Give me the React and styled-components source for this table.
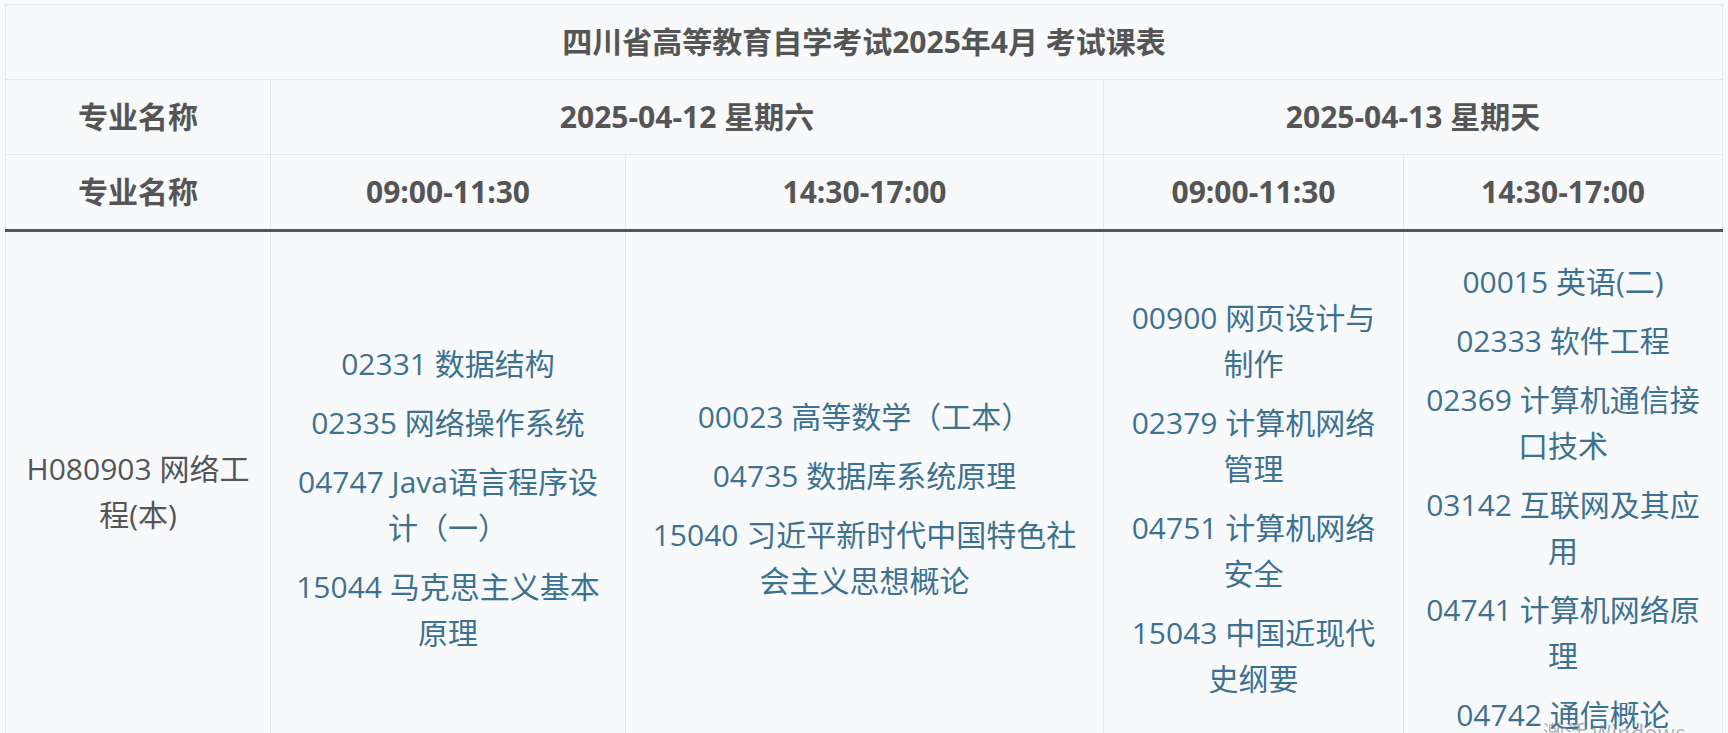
import React from "react";
import styled, { createGlobalStyle } from "styled-components";

const schedule = {
  title: "四川省高等教育自学考试2025年4月 考试课表",
  days: [
    { date: "2025-04-12 星期六", slots: ["09:00-11:30", "14:30-17:00"] },
    { date: "2025-04-13 星期天", slots: ["09:00-11:30", "14:30-17:00"] }
  ],
  major: "H080903 网络工程(本)",
  courses: [
    [
      "02331 数据结构",
      "02335 网络操作系统",
      "04747 Java语言程序设计（一）",
      "15044 马克思主义基本原理"
    ],
    [
      "00023 高等数学（工本）",
      "04735 数据库系统原理",
      "15040 习近平新时代中国特色社会主义思想概论"
    ],
    [
      "00900 网页设计与制作",
      "02379 计算机网络管理",
      "04751 计算机网络安全",
      "15043 中国近现代史纲要"
    ],
    [
      "00015 英语(二)",
      "02333 软件工程",
      "02369 计算机通信接口技术",
      "03142 互联网及其应用",
      "04741 计算机网络原理",
      "04742 通信概论"
    ]
  ]
};

const colWidths = [265, 355, 478, 300, 319];

const App = () => (
  <Page>
    <GlobalStyle />
    <Table>
      <colgroup>
        {colWidths.map((w, i) => (
          <col key={i} style={{ width: w }} />
        ))}
      </colgroup>
      <thead>
        <tr>
          <HeadCell colSpan={5}>{schedule.title}</HeadCell>
        </tr>
        <tr>
          <HeadCell>专业名称</HeadCell>
          {schedule.days.map(day => (
            <HeadCell key={day.date} colSpan={2}>
              {day.date}
            </HeadCell>
          ))}
        </tr>
        <tr>
          <HeadCell $rule>专业名称</HeadCell>
          {schedule.days.map(day =>
            day.slots.map(slot => (
              <HeadCell $rule key={day.date + slot}>
                {slot}
              </HeadCell>
            ))
          )}
        </tr>
      </thead>
      <tbody>
        <tr>
          <BodyCell>{schedule.major}</BodyCell>
          {schedule.courses.map((list, i) => (
            <BodyCell key={i}>
              {list.map(course => (
                <Course key={course}>{course}</Course>
              ))}
            </BodyCell>
          ))}
        </tr>
      </tbody>
    </Table>
    <Watermark>激活 Windows</Watermark>
  </Page>
);

const GlobalStyle = createGlobalStyle`
  html, body {
    margin: 0;
    padding: 0;
    background: #f8f9fb;
  }
  body {
    font-family: "Open Sans", "Noto Sans CJK SC", sans-serif;
  }
`;

const Page = styled.div`
  padding: 4px 0 0 5px;
  min-height: 733px;
  box-sizing: border-box;
`;

const Table = styled.table`
  width: 1717px;
  border-collapse: collapse;
  table-layout: fixed;
  font-size: 30px;
  line-height: 46px;
  color: #555;
  border: 1px solid #e4e6e9;
`;

const HeadCell = styled.th`
  padding: 14px 18px;
  border: 1px solid #e4e6e9;
  border-bottom: ${p => (p.$rule ? "3px solid #555" : "1px solid #e4e6e9")};
  font-weight: 700;
  text-align: center;
  vertical-align: middle;
  color: #555;
`;

const BodyCell = styled.td`
  padding: 14px 18px;
  border: 1px solid #e4e6e9;
  text-align: center;
  vertical-align: middle;
  color: #555;
`;

const Course = styled.div`
  margin-top: 13px;
  color: #3d7190;
`;

const Watermark = styled.div`
  position: fixed;
  left: 1543px;
  top: 717px;
  font-family: "Noto Sans CJK SC", sans-serif;
  font-size: 22px;
  line-height: 28px;
  color: rgba(120, 120, 120, 0.55);
  pointer-events: none;
`;

export default App;
